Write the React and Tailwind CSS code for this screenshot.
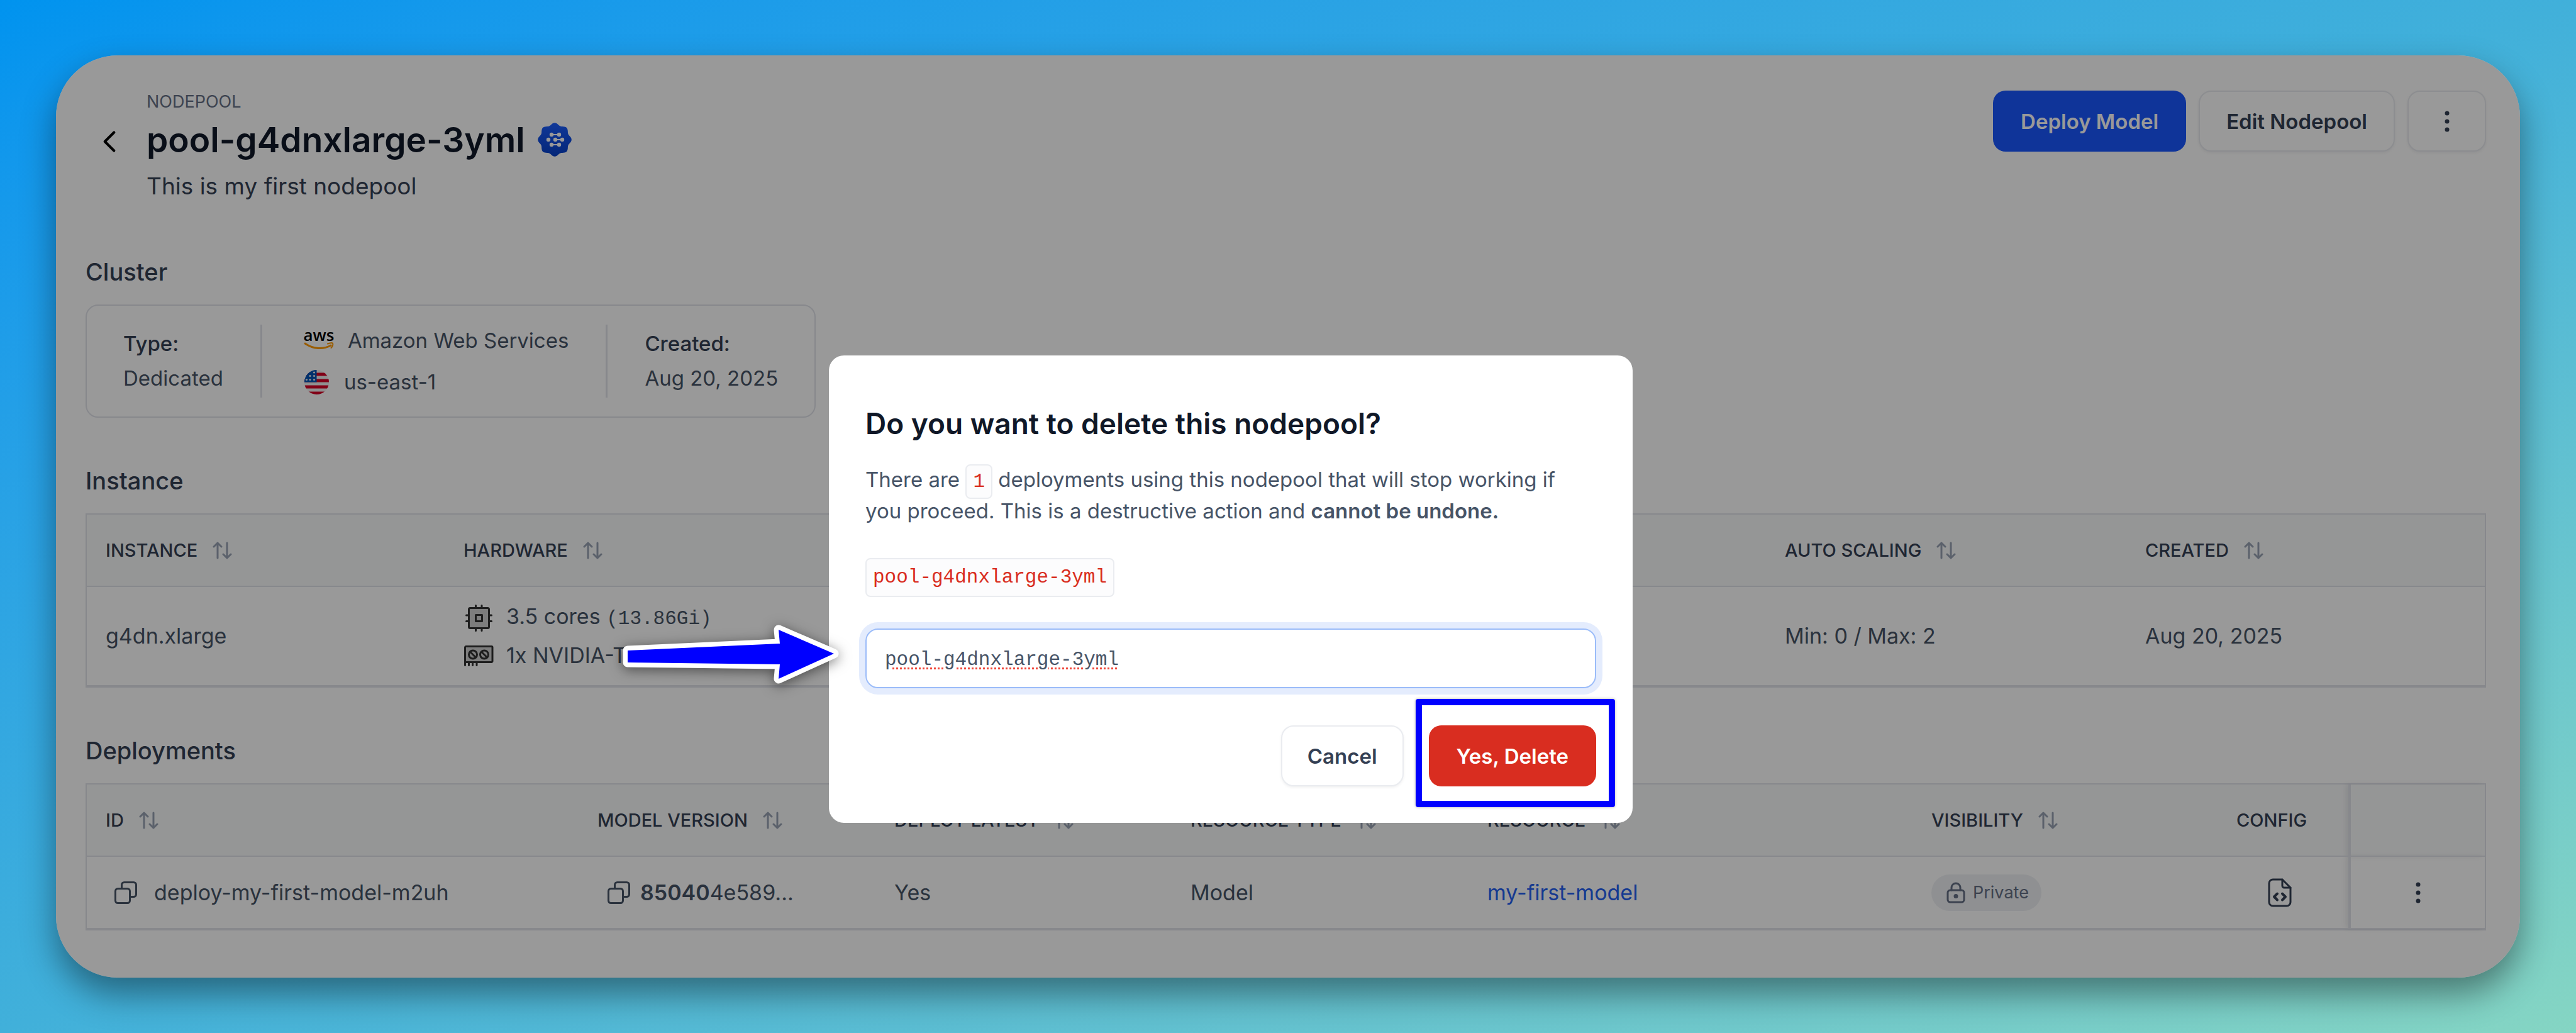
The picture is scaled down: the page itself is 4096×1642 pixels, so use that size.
import React, { useState } from "react";

const sans = "font-['Inter','Liberation_Sans',sans-serif]";

function SortIcon() {
  return (
    <svg viewBox="0 0 31 28" className="h-[28px] w-[31px] shrink-0 text-[#98a2b3]" fill="none" stroke="currentColor" strokeWidth="3" strokeLinecap="round" strokeLinejoin="round" aria-hidden="true">
      <path d="M8 26V2M2 8l6-6 6 6M23 2v24M17 20l6 6 6-6" />
    </svg>
  );
}

function CopyIcon() {
  return (
    <svg viewBox="0 0 36 36" className="h-[36px] w-[36px] shrink-0 text-[#475467]" fill="none" stroke="currentColor" strokeWidth="3" strokeLinejoin="round" aria-hidden="true">
      <rect x="1.5" y="11.5" width="23" height="23" rx="4" />
      <path d="M11.5 11.5V5.5a4 4 0 0 1 4-4h15a4 4 0 0 1 4 4v15a4 4 0 0 1-4 4h-6" />
    </svg>
  );
}

function KebabIcon() {
  return (
    <svg viewBox="0 0 8 34" className="h-[34px] w-[8px] text-[#344054]" fill="currentColor" aria-hidden="true">
      <circle cx="4" cy="4" r="3.5" />
      <circle cx="4" cy="17" r="3.5" />
      <circle cx="4" cy="30" r="3.5" />
    </svg>
  );
}

function BadgeIcon() {
  const pts = [];
  for (let i = 0; i < 96; i++) {
    const a = (i / 96) * Math.PI * 2 - Math.PI / 2;
    const r = 25 + 1.8 * Math.cos(8 * (a + Math.PI / 2));
    pts.push(`${(27 + r * Math.cos(a)).toFixed(1)},${(27 + r * Math.sin(a)).toFixed(1)}`);
  }
  return (
    <svg viewBox="0 0 54 54" className="h-[54px] w-[54px]" role="img" aria-label="Kubernetes nodepool">
      <defs>
        <linearGradient id="badge" x1="0" y1="0" x2="0" y2="1">
          <stop offset="0" stopColor="#1c5eff" />
          <stop offset="1" stopColor="#0640c8" />
        </linearGradient>
      </defs>
      <polygon points={pts.join(" ")} fill="url(#badge)" />
      <g fill="#fff" stroke="#fff">
        <path d="M22 19h12M28 27h11M22 35h12" strokeWidth="2" />
        <g stroke="none">
          <circle cx="22" cy="19" r="3.2" /><circle cx="34" cy="19" r="3.2" />
          <circle cx="17" cy="27" r="3.2" /><circle cx="28" cy="27" r="3.2" /><circle cx="39" cy="27" r="3.2" />
          <circle cx="22" cy="35" r="3.2" /><circle cx="34" cy="35" r="3.2" />
        </g>
      </g>
    </svg>
  );
}

function AwsLogo() {
  return (
    <svg viewBox="0 0 47 31" className="h-[31px] w-[47px] shrink-0 overflow-visible" role="img" aria-label="AWS">
      <text x="23" y="16" textAnchor="middle" fontFamily="Open Sans" fontWeight="600" fontSize="26" fill="#000">aws</text>
      <path d="M1 20c13 9 29 10 41 3" fill="none" stroke="#f90" strokeWidth="3" strokeLinecap="round" />
      <path d="M37 20.5c3-1.5 7-1.8 8-.8s0 5-2.5 7.3" fill="none" stroke="#f90" strokeWidth="2" strokeLinecap="round" />
    </svg>
  );
}

function FlagIcon() {
  return (
    <svg viewBox="0 0 39 39" className="h-[39px] w-[39px] shrink-0" role="img" aria-label="United States">
      <clipPath id="flag"><circle cx="19.5" cy="19.5" r="19.5" /></clipPath>
      <g clipPath="url(#flag)">
        <rect width="39" height="39" fill="#f0f0f0" />
        <path d="M0 4.500h39v5H0zM0 14.500h39v5H0zM0 24.500h39v5H0zM0 34.500h39v5H0z" fill="#d80027" />
        <rect width="19.5" height="19.5" fill="#0052b4" />
        <g fill="#f0f0f0">
          <circle cx="15.5" cy="4" r="1.6" /><circle cx="9" cy="9.5" r="1.6" /><circle cx="15.5" cy="9.5" r="1.6" />
          <circle cx="3.5" cy="15.5" r="1.6" /><circle cx="9" cy="15.5" r="1.6" /><circle cx="15.5" cy="15.5" r="1.6" />
        </g>
      </g>
    </svg>
  );
}

function CpuIcon() {
  return (
    <svg viewBox="0 0 43 43" className="h-[43px] w-[43px]" fill="none" stroke="#333" strokeWidth="3" strokeLinecap="round" strokeLinejoin="round" aria-hidden="true">
      <path d="M16.5 5V1.5M26 5V1.5M16.5 41.5V38M26 41.5V38M5 17H1.5M5 26.5H1.5M41.5 17H38M41.5 26.5H38" />
      <rect x="5.5" y="5.5" width="32" height="32" rx="2" fill="#d0d0d0" />
      <rect x="16.5" y="16.5" width="10" height="10" />
    </svg>
  );
}

function GpuIcon() {
  return (
    <svg viewBox="0 0 47 33" className="h-[33px] w-[47px]" fill="none" stroke="#333" strokeWidth="3" strokeLinecap="round" strokeLinejoin="round" aria-hidden="true">
      <path d="M1.5 31.5V3a1.5 1.5 0 0 1 1.5-1.5h40.5A1.5 1.5 0 0 1 45 3v22a1.5 1.5 0 0 1-1.5 1.5h-42" fill="#d0d0d0" />
      <path d="M7.500 27v4.500M13.500 27v4.500M20 27v4.500" />
      <circle cx="14" cy="14.5" r="6.5" /><circle cx="32" cy="14.5" r="6.5" />
      <path d="M10 10.500l8 8M28 10.500l8 8" />
    </svg>
  );
}

function LockIcon() {
  return (
    <svg viewBox="0 0 30 34" className="h-[34px] w-[30px]" fill="none" stroke="currentColor" strokeWidth="3" strokeLinecap="round" strokeLinejoin="round" aria-hidden="true">
      <rect x="2" y="13" width="26" height="19" rx="4" />
      <path d="M8 13V9a7 7 0 0 1 14 0v4" />
      <circle cx="15" cy="22.5" r="2" fill="currentColor" />
    </svg>
  );
}

function FileCodeIcon() {
  return (
    <svg viewBox="0 0 38 46" className="h-[46px] w-[38px]" fill="none" stroke="#344054" strokeWidth="3" strokeLinecap="round" strokeLinejoin="round" aria-hidden="true">
      <path d="M23 2H8a6 6 0 0 0-6 6v30a6 6 0 0 0 6 6h22a6 6 0 0 0 6-6V15z" />
      <path d="M23 2v10a3 3 0 0 0 3 3h10" />
      <path d="M15 24.500l-5 5 5 5M23 24.500l5 5-5 5" strokeWidth="4" />
    </svg>
  );
}

function Th({ children, sort = true, className = "" }) {
  return (
    <th scope="col" className={`h-[114px] border-b-2 border-[#e1e3ea] bg-[#f9fafb] pl-[30px] text-left text-[29px] font-medium text-[#344054] ${className}`}>
      {children && (
        <span className="flex items-center gap-6 whitespace-nowrap">
          {children}
          {sort && <SortIcon />}
        </span>
      )}
    </th>
  );
}

function Heading({ children }) {
  return <h2 className="text-[38px] leading-[48px] font-medium text-[#344054]">{children}</h2>;
}

const button = "h-[97px] rounded-[20px] text-[33px] font-semibold";
const outline = "flex items-center justify-center border-2 border-[#eaecf0] bg-white text-[#344054] shadow-[0_2px_4px_rgba(16,24,40,0.06)]";
const code = "rounded-[8px] border-2 border-[#eaecf0] bg-[#fcfcfd] px-[10px] font-['Liberation_Mono',monospace] text-[31px] text-[#d92d20]";

export default function App() {
  const [value, setValue] = useState("pool-g4dnxlarge-3yml");
  const cell = "border-b-2 border-[#e1e3ea] pl-[30px]";
  return (
    <div className={`min-h-screen bg-linear-to-br from-[#0093ef] via-[#41b0da] to-[#85d5c3] px-[89px] py-[88px] text-[34px] leading-[50px] text-[#475467] ${sans}`}>
      <div className="relative rounded-[98px] bg-white shadow-[0_26px_54px_rgba(0,0,0,0.42)]">
        <main className="flex min-h-[1466px] flex-col pr-[54px] pl-[47px]">
          <header className="flex items-start justify-between pt-14">
            <div className="flex items-start">
              <button aria-label="Back" className="mt-[56px] flex w-[97px] justify-start pl-[13px]">
                <svg viewBox="0 0 24 24" className="h-[50px] w-[50px]" fill="none" stroke="#000" strokeWidth="2" strokeLinecap="round" strokeLinejoin="round"><path d="M15.500 19L8.500 12l7-7" /></svg>
              </button>
              <div>
                <p className="text-[27px] leading-[36px] text-[#667085]">NODEPOOL</p>
                <div className="flex items-center gap-5">
                  <h1 className="text-[55px] leading-[84px] font-semibold text-[#101828]">pool-g4dnxlarge-3yml</h1>
                  <BadgeIcon />
                </div>
                <p className="text-[37px] leading-[64px] text-[#344054]">This is my first nodepool</p>
              </div>
            </div>
            <div className="flex gap-5">
              <button className={`bg-[#1a58ff] px-11 text-white ${button}`}>Deploy Model</button>
              <button className={`px-[42px] ${button} ${outline}`}>Edit Nodepool</button>
              <button aria-label="More actions" className={`w-[125px] ${button} ${outline}`}><KebabIcon /></button>
            </div>
          </header>

          <section className="pt-20">
            <Heading>Cluster</Heading>
            <div className="mt-7 flex w-fit items-center gap-[59px] rounded-[20px] border-2 border-[#e1e3ea] px-[58px] py-[30px] text-[33px]">
              <div>
                <p className="leading-[55px] font-medium text-[#344054]">Type:</p>
                <p className="leading-[55px]">Dedicated</p>
              </div>
              <div className="h-[116px] w-[3px] bg-[#e1e3ea]" />
              <div className="flex flex-col gap-4 pl-2">
                <p className="flex items-center gap-[22px]"><AwsLogo />Amazon Web Services</p>
                <p className="flex items-center gap-6"><FlagIcon />us-east-1</p>
              </div>
              <div className="h-[116px] w-[3px] bg-[#e1e3ea]" />
              <div>
                <p className="leading-[55px] font-medium text-[#344054]">Created:</p>
                <p className="leading-[55px]">Aug 20, 2025</p>
              </div>
            </div>
          </section>

          <section className="pt-[76px]">
            <Heading>Instance</Heading>
            <div className="mt-7 border-2 border-[#e1e3ea]">
              <table className="w-full table-fixed">
                <colgroup>
                  <col className="w-[569px]" /><col className="w-[2101px]" /><col className="w-[573px]" /><col className="w-[570px]" />
                </colgroup>
                <thead><tr><Th>INSTANCE</Th><Th>HARDWARE</Th><Th>AUTO SCALING</Th><Th>CREATED</Th></tr></thead>
                <tbody>
                  <tr className="h-[158px]">
                    <td className={cell}>g4dn.xlarge</td>
                    <td className={cell}>
                      <div className="flex flex-col gap-2">
                        <p className="flex items-center gap-5"><span className="flex w-[48px] justify-center"><CpuIcon /></span><span>3.5 cores <span className="font-['Liberation_Mono',monospace] text-[31px]">(13.86Gi)</span></span></p>
                        <p className="flex items-center gap-5"><span className="flex w-[48px] justify-center"><GpuIcon /></span><span>1x NVIDIA-T4</span></p>
                      </div>
                    </td>
                    <td className={cell}>Min: 0 / Max: 2</td>
                    <td className={cell}>Aug 20, 2025</td>
                  </tr>
                </tbody>
              </table>
            </div>
          </section>

          <section className="pt-[76px]">
            <Heading>Deployments</Heading>
            <div className="mt-7 border-2 border-[#e1e3ea]">
              <table className="w-full table-fixed">
                <colgroup>
                  <col className="w-[782px]" /><col className="w-[472px]" /><col className="w-[471px]" /><col className="w-[472px]" /><col className="w-[706px]" /><col className="w-[485px]" /><col className="w-[210px]" /><col className="w-[215px]" />
                </colgroup>
                <thead>
                  <tr>
                    <Th>ID</Th><Th>MODEL VERSION</Th><Th>DEPLOY LATEST</Th><Th>RESOURCE TYPE</Th><Th>RESOURCE</Th><Th>VISIBILITY</Th><Th sort={false}>CONFIG</Th>
                    <Th className="border-l-4 shadow-[-6px_0_8px_rgba(16,24,40,0.08)]" />
                  </tr>
                </thead>
                <tbody>
                  <tr className="h-[115px]">
                    <td className={cell}><div className="flex items-center gap-[27px] pl-[14px]"><button aria-label="Copy ID"><CopyIcon /></button>deploy-my-first-model-m2uh</div></td>
                    <td className={cell}><div className="flex items-center gap-4 pl-4"><button aria-label="Copy version"><CopyIcon /></button><span><b className="font-semibold">85040</b>4e589...</span></div></td>
                    <td className={cell}>Yes</td>
                    <td className={cell}>Model</td>
                    <td className={cell}><a href="#my-first-model" className="text-[#2560f0]">my-first-model</a></td>
                    <td className={cell}><span className="flex h-[58px] w-fit items-center gap-3 rounded-full bg-[#eff1f4] pr-5 pl-6 text-[27px] text-[#667085]"><LockIcon />Private</span></td>
                    <td className="border-b-2 border-[#e1e3ea] pl-[80px]"><button aria-label="View config" className="flex"><FileCodeIcon /></button></td>
                    <td className="border-b-2 border-l-4 border-[#e1e3ea] shadow-[-6px_0_8px_rgba(16,24,40,0.08)]"><button aria-label="Row actions" className="flex w-full justify-center"><KebabIcon /></button></td>
                  </tr>
                </tbody>
              </table>
            </div>
          </section>
        </main>

        <div className="absolute inset-0 flex items-start justify-center rounded-[98px] bg-black/40 pt-[477px] pr-[182px]">
          <div className="relative">
            <div role="dialog" aria-modal="true" aria-labelledby="dialog-title" className="w-[1278px] rounded-[24px] bg-white px-[58px] pt-[76px] pb-[58px]">
              <h2 id="dialog-title" className="text-[46px] leading-[64px] font-semibold text-[#101828]">Do you want to delete this nodepool?</h2>
              <p className="mt-8 text-[33px]">
                There are{" "}
                <code className={`py-[8px] leading-[30px] ${code}`}>1</code>{" "}
                deployments using this nodepool that will stop working if you proceed. This is a destructive action and <b className="font-semibold">cannot be undone.</b>
              </p>
              <label htmlFor="confirm" className="mt-[50px] block">
                <code className={`block w-fit leading-[58px] ${code}`}>pool-g4dnxlarge-3yml</code>
              </label>
              <input
                id="confirm"
                value={value}
                onChange={(e) => setValue(e.target.value)}
                className="mt-[50px] block h-[95px] w-full rounded-[20px] border-2 border-[#9bbcf9] px-[29px] pt-1 font-['Liberation_Mono',monospace] text-[31px] text-[#475467] underline decoration-[#f04438] decoration-dotted decoration-3 underline-offset-4 shadow-[0_0_0_10px_#e4ecfd] outline-none"
              />
              <div className="mt-[59px] flex justify-end gap-10">
                <button className={`px-[40px] ${button} ${outline}`}>Cancel</button>
                <button className={`relative bg-[#d92d20] px-11 text-white ${button}`}>
                  Yes, Delete
                  <span className="pointer-events-none absolute -top-[42px] -right-[30px] -bottom-[33px] -left-[21px] rounded-[4px] border-[10px] border-[#0000ff] shadow-[0_0_4px_rgba(0,0,0,0.3)]" />
                </button>
              </div>
            </div>
            <svg viewBox="0 0 352 100" className="absolute top-[424px] -left-[332px] h-[100px] w-[352px] overflow-visible drop-shadow-[0_4px_10px_rgba(0,0,0,0.5)]" aria-hidden="true">
              <path d="M12 45L254 34L252 12L340 50L252 90L254 67L12 64z" fill="#0000ff" stroke="#fff" strokeWidth="15" strokeLinejoin="round" paintOrder="stroke" />
            </svg>
          </div>
        </div>
      </div>
    </div>
  );
}
